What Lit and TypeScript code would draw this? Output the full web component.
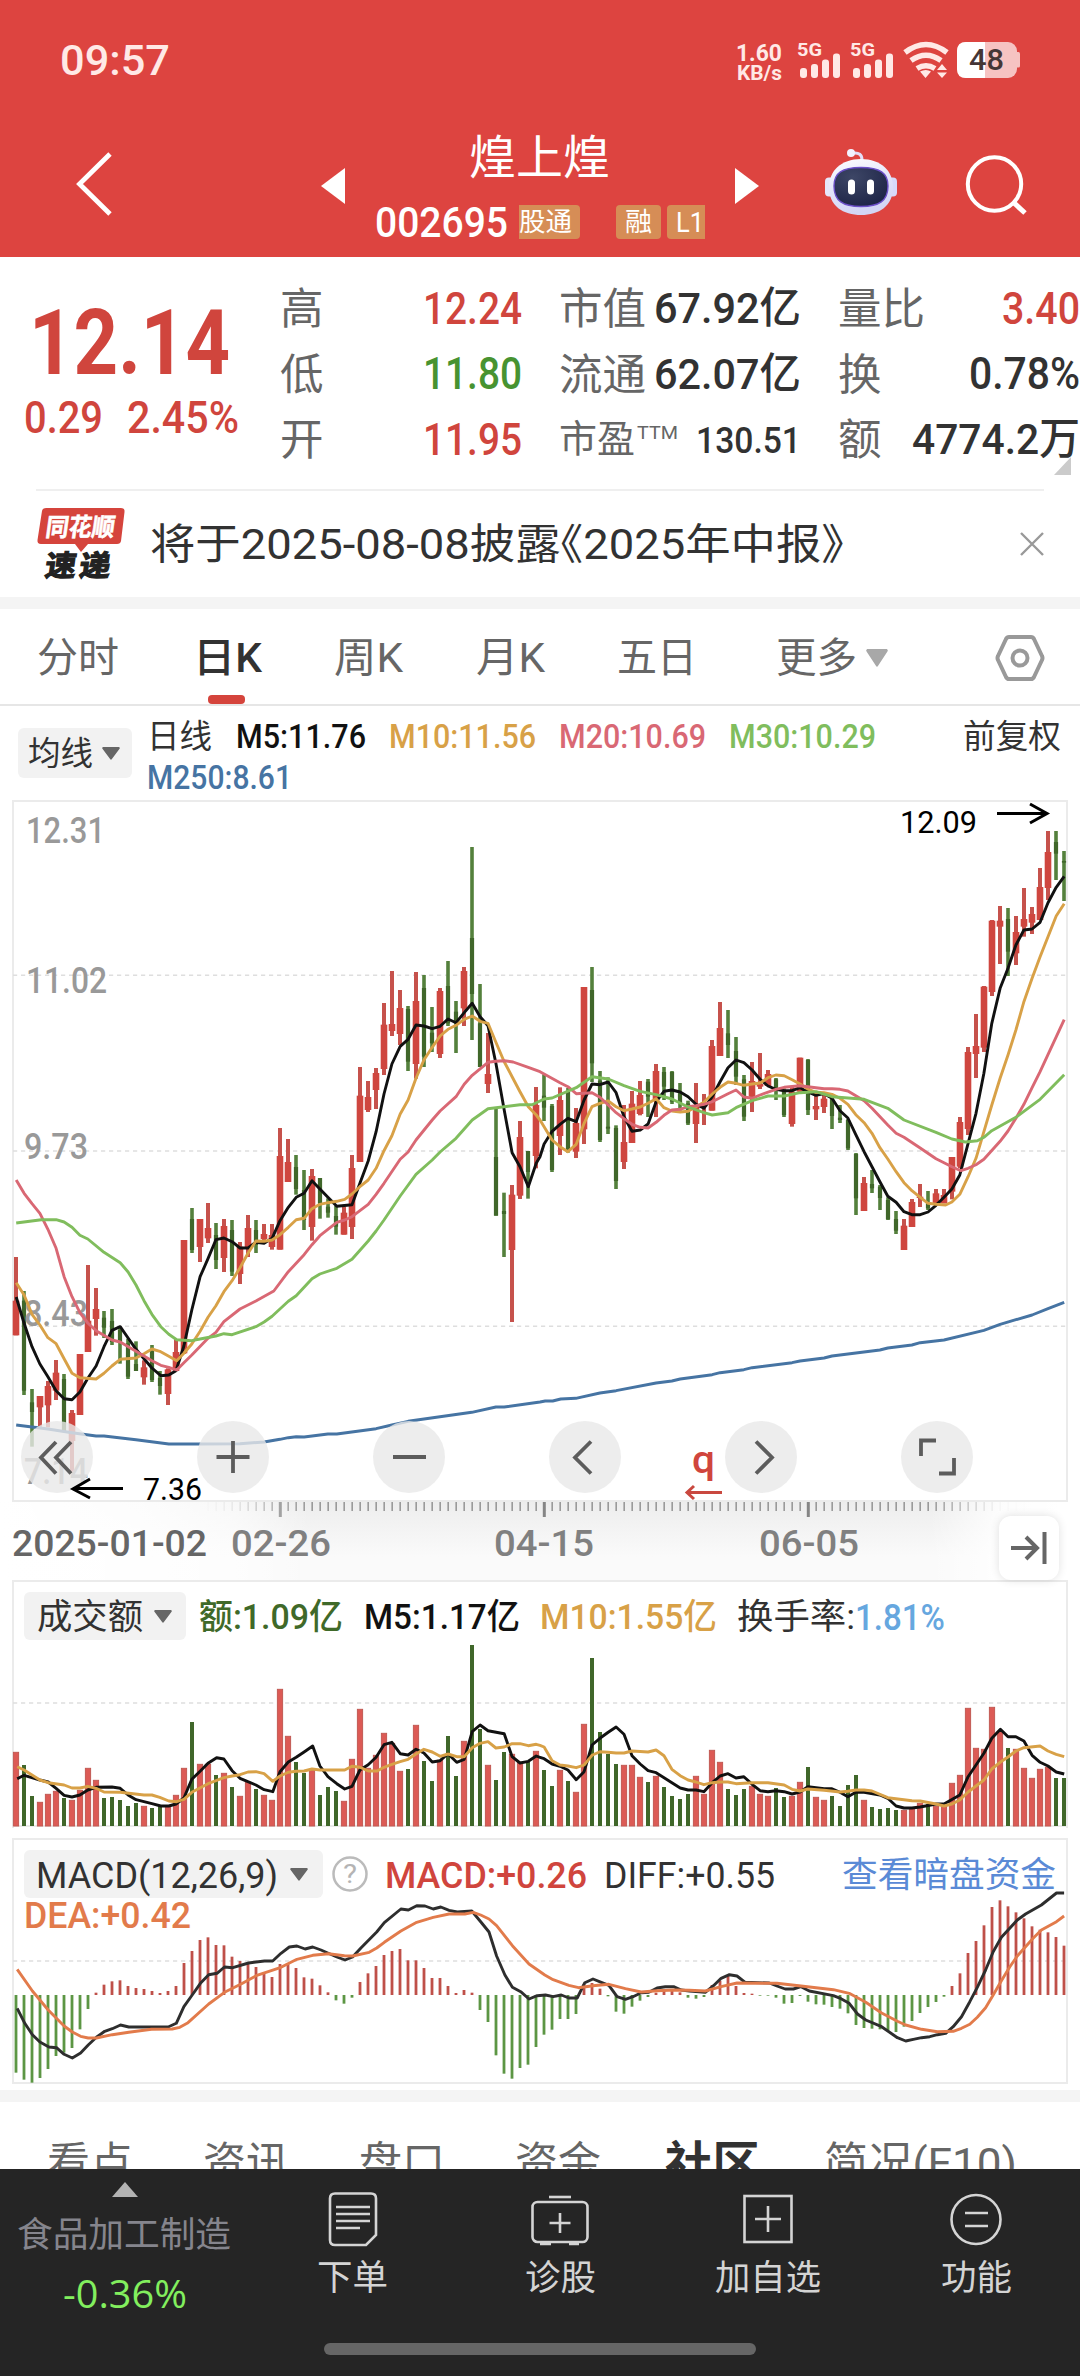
import { LitElement, html, svg, css } from "lit";
import { customElement } from "lit/decorators.js";

type Pt = number[];

/* One entry per trading day: direction, high, body top, body bottom, low (thirds of a pixel below the chart origin). */
const DAYS = `R 1401 1532 1636 1636|G 1503 1532 1802 1815|G 1797 1837 1866 1970|R 1818 1818 1852 1910|R 1773 1788 1846 1912|R 1710 1748 1802 1830|G 1752 1767 1925 1925|R 1860 1869 1953 2045|R 1692 1692 1875 1875|R 1425 1592 1686 1686
R 1494 1557 1587 1637|G 1563 1583 1613 1644|G 1557 1593 1656 1665|G 1610 1620 1655 1721|G 1646 1660 1760 1767|G 1654 1722 1743 1743|R 1711 1732 1762 1784|G 1665 1680 1770 1776|G 1743 1764 1788 1814|R 1735 1738 1812 1845
R 1647 1686 1743 1743|R 1350 1350 1690 1692|G 1254 1287 1380 1389|R 1287 1287 1371 1416|R 1239 1314 1345 1359|G 1299 1335 1410 1437|R 1287 1308 1404 1446|G 1290 1320 1445 1458|R 1356 1370 1452 1482|R 1275 1314 1375 1401
G 1290 1320 1365 1389|R 1302 1332 1347 1360|R 1302 1335 1371 1379|R 1014 1098 1379 1379|R 1047 1116 1176 1176|G 1095 1131 1197 1214|G 1140 1200 1290 1320|R 1137 1158 1311 1352|G 1164 1164 1240 1286|G 1225 1250 1268 1283
G 1248 1278 1310 1334|R 1250 1268 1334 1334|R 1095 1134 1311 1347|R 831 917 1116 1116|R 873 921 960 966|R 834 849 900 957|R 639 704 837 855|R 543 702 723 738|R 600 654 732 765|G 648 657 815 843
R 546 633 822 866|G 555 594 800 831|G 651 728 760 786|R 594 603 792 804|G 513 588 700 708|G 633 665 700 789|R 531 543 655 708|G 171 444 612 750|G 582 700 831 831|R 729 852 882 909
G 957 1101 1277 1277|G 1208 1263 1272 1401|R 1185 1214 1380 1596|R 993 1041 1217 1227|G 1083 1083 1146 1226|R 891 945 1098 1135|G 853 917 953 993|G 942 948 1140 1146|R 892 930 1038 1095|G 894 905 1080 1088
R 954 999 1085 1104|R 591 591 1018 1062|G 531 600 820 876|G 843 872 1050 1056|G 862 1010 1016 1032|G 1006 1014 1173 1197|R 945 1056 1116 1137|R 903 941 1059 1059|R 873 915 972 976|G 867 875 920 981
R 822 843 930 981|G 831 846 890 930|G 843 846 935 942|G 879 910 938 962|G 932 940 1000 1005|R 879 945 1002 1059|R 912 938 950 1005|R 750 768 962 962|R 636 714 798 798|G 660 730 765 804
G 741 783 860 885|G 855 868 980 993|R 816 873 920 966|R 789 882 890 897|R 840 852 888 888|G 864 868 900 930|G 895 905 975 981|R 890 905 1002 1010|R 803 803 905 905|G 807 810 960 975
R 905 948 958 990|R 915 926 951 969|G 915 925 978 1017|G 945 983 990 999|G 987 990 1075 1080|G 1089 1092 1225 1275|R 1161 1179 1263 1263|G 1140 1182 1195 1209|G 1185 1190 1224 1260|G 1222 1230 1288 1290
G 1263 1287 1322 1332|R 1287 1307 1380 1380|R 1227 1236 1311 1311|R 1182 1220 1224 1251|G 1203 1240 1255 1260|R 1197 1210 1240 1240|R 1197 1215 1240 1240|R 1101 1101 1205 1228|R 981 996 1130 1135|R 771 786 1017 1035
R 672 768 792 864|R 588 590 773 786|R 390 392 606 618|R 348 392 410 522|G 354 387 485 558|R 378 426 490 525|R 294 387 410 440|R 351 372 398 432|R 234 291 390 390|R 123 186 294 330
G 123 156 191 270|G 183 213 218 333`
  .split(/[|\n]/)
  .map((s) => s.trim().split(" "))
  .map(([d, ...v]) => ({ up: d === "R", v: v.map(Number) }));

const VOLUMES = `547 585 678 697 673 664 684 691 661 595 631 684 681 690 708 699 709 714 709 709 676 595 456 583 583 615 610 651 679 637 657 676 691 358 499 576 609 600 675 651 663 694 568 418 595 556 490 520 604 597 466 573 633 571 498 618 514 225 477 586 630 546 553 577 573 544 600 648 601 633 667 463 264 486 552 582 586 586 622 636 619 651 678 687 672 619 673 541 577 657 675 657 649 673 679 654 681 679 637 591 682 691 678 708 645 615 691 711 717 714 720 721 715 700 702 709 706 640 616 415 535 538 412 484 534 538 595 625 598 592 624 624`
  .split(" ").map(Number);

const MACD = `728 749 758 744 717 678 668 654 598 537 488 464 454 451 468 474 477 483 489 483 468 399 363 330 322 345 346 380 393 399 411 426 441 402 402 414 442 446 466 487 511 521 503 456 430 408 375 363 357 391 391 414 444 444 468 489 480 488 540 576 676 731 746 714 704 651 614 599 567 567 552 462 459 476 499 545 551 530 512 501 488 482 482 487 503 506 501 465 452 438 468 489 491 497 497 503 521 519 498 515 523 524 531 536 550 585 594 596 598 602 606 590 573 549 531 516 500 468 430 369 333 286 231 211 229 247 265 289 299 307 321 347`
  .split(" ").map(Number);

const dayX = (i: number) => 16 + 8 * i;

/* Builds an svg path from "x,y" samples; the second half of a series starts at mid-chart. */
const trace = (y0: number, left: string, right = "", kx = 2.9037) => {
  const read = (s: string, dx: number): Pt[] =>
    s.trim() ? s.trim().split(/\s+/).map((p) => {
      const [x, y] = p.split(",").map(Number);
      return [dx + x / kx, y0 + y / 3];
    }) : [];
  return "M" + [...read(left, 0), ...read(right, 540)].map((p) => p[0].toFixed(1) + " " + p[1].toFixed(1)).join("L");
};

const MA5 = trace(790,
  "47,1521 70,1600 93,1670 116,1722 139,1760 163,1802 186,1826 209,1829 232,1806 255,1765 279,1728 302,1670 325,1621 349,1610 372,1644 395,1678 418,1706 441,1734 467,1757 490,1755 511,1742 534,1668 557,1560 581,1460 604,1406 627,1349 650,1344 674,1355 697,1374 720,1374 743,1357 767,1360 790,1345 813,1292 837,1252 860,1222 883,1210 906,1172 929,1197 952,1222 978,1249 1022,1244 1045,1180 1069,1113 1092,1025 1115,912 1138,822 1162,769 1185,748 1208,705 1231,708 1255,716 1278,709 1301,687 1324,698 1348,668 1371,640 1394,680 1417,707 1440,820 1464,960 1487,1088 1510,1130 1534,1190 1557,1120",
  "0,1100 12,1062 35,1024 58,1003 81,985 105,995 128,930 151,882 174,884 198,876 221,908 244,980 267,1024 291,1020 314,1002 337,935 360,904 383,900 407,906 430,920 453,943 476,955 500,920 523,875 546,833 569,810 592,818 616,840 639,868 662,888 685,898 709,902 732,902 755,893 778,906 801,916 825,911 848,925 871,962 894,984 917,1034 941,1085 964,1130 987,1175 1010,1219 1034,1237 1057,1265 1080,1274 1104,1274 1127,1266 1150,1246 1173,1222 1196,1197 1219,1155 1243,1060 1266,970 1289,850 1312,700 1336,595 1359,535 1382,465 1405,420 1429,417 1452,397 1475,338 1499,292 1522,259");
const MA10 = trace(790,
  "47,1478 70,1515 93,1573 116,1605 139,1643 163,1661 186,1706 209,1750 232,1763 279,1767 302,1750 325,1728 349,1708 395,1704 418,1691 441,1677 464,1684 490,1699 513,1712 534,1690 557,1662 581,1624 604,1582 627,1547 650,1505 674,1472 697,1433 720,1390 743,1353 767,1354 790,1350 813,1334 837,1312 860,1289 883,1285 906,1256 929,1243 952,1238 978,1234 1001,1228 1022,1212 1045,1190 1069,1170 1092,1135 1115,1082 1138,1037 1162,972 1185,930 1208,865 1231,810 1255,772 1278,738 1301,718 1324,706 1348,688 1371,678 1394,694 1417,700 1440,757 1464,815 1487,860 1510,905 1534,950 1557,975",
  "0,990 35,1050 58,1070 81,1085 105,1063 128,1000 151,950 174,940 198,933 221,950 244,962 267,957 291,951 314,940 337,926 360,953 383,963 407,966 430,964 453,950 476,937 500,912 523,892 546,876 569,880 592,886 616,882 639,879 662,863 685,855 709,857 732,869 755,882 778,897 801,907 825,908 848,913 871,925 894,943 917,974 941,998 964,1030 987,1073 1010,1107 1034,1145 1057,1178 1080,1202 1104,1222 1127,1240 1150,1243 1178,1245 1196,1236 1219,1213 1243,1160 1266,1105 1289,1025 1312,945 1336,865 1359,795 1382,720 1405,635 1429,565 1452,500 1475,440 1499,378 1522,341");
const MA20 = trace(790,
  "47,1170 70,1210 93,1241 116,1270 139,1318 163,1375 186,1460 209,1520 232,1568 255,1599 279,1622 325,1650 349,1656 395,1684 441,1712 467,1726 490,1732 513,1740 534,1718 557,1695 604,1645 627,1627 650,1595 697,1557 743,1533 795,1503 837,1445 883,1394 906,1364 929,1337 978,1297 1001,1290 1022,1280 1069,1243 1092,1213 1115,1180 1162,1108 1185,1086 1208,1050 1255,990 1278,963 1324,920 1348,883 1371,856 1417,817 1440,814 1464,812 1490,816 1534,832",
  "0,845 58,878 81,890 105,911 151,908 174,922 198,945 221,968 244,986 267,1003 291,1012 314,1014 337,997 360,976 383,960 407,958 430,950 453,947 476,943 500,935 546,911 569,900 592,921 616,925 639,915 685,898 709,892 755,887 801,893 825,896 848,896 871,898 894,903 917,917 941,932 964,955 1010,1005 1034,1030 1057,1042 1104,1074 1150,1106 1173,1118 1196,1130 1222,1142 1243,1135 1266,1124 1289,1108 1336,1054 1359,1023 1382,985 1405,943 1429,893 1452,845 1522,689");
const MA30 = trace(790,
  "47,1299 120,1289 163,1289 186,1296 209,1312 232,1336 255,1347 302,1387 349,1418 372,1446 395,1485 418,1532 441,1573 467,1610 490,1633 513,1649 557,1652 581,1647 627,1638 650,1631 674,1634 743,1610 767,1596 790,1579 837,1534 860,1517 906,1466 929,1452 978,1435 1022,1408 1069,1353 1092,1323 1115,1290 1162,1218 1208,1153 1255,1110 1278,1086 1324,1045 1371,990 1417,956 1510,944 1545,944",
  "0,933 12,927 35,924 105,893 151,860 198,867 244,887 291,904 337,914 383,927 430,951 476,968 500,975 546,968 569,953 616,932 662,918 709,918 755,908 801,905 848,920 941,928 1010,955 1057,990 1150,1027 1196,1047 1235,1056 1270,1052 1289,1042 1312,1022 1382,982 1405,964 1452,928 1522,854");
const MA250 = trace(790,
  "47,1905 139,1917 209,1928 279,1938 302,1938 395,1949 490,1962 580,1962 697,1961 767,1956 813,1948 837,1943 860,1940 883,1941 952,1932 978,1932 1092,1916 1138,1905 1185,1894 1370,1867 1440,1851 1464,1851",
  "0,1836 15,1833 37,1833 60,1827 104,1825 174,1809 221,1802 337,1779 383,1773 407,1767 500,1754 523,1748 592,1739 616,1733 732,1718 755,1713 825,1704 848,1698 987,1680 1010,1674 1080,1665 1104,1658 1173,1650 1289,1621 1336,1603 1429,1575 1475,1556 1522,1537");
const VOL5 = trace(1570,
  "50,626 70,616 116,630 140,636 163,655 186,676 209,681 232,675 255,660 279,652 325,651 349,655 372,675 395,689 441,701 467,708 490,708 511,702 534,684 557,628 581,604 604,580 629,563 650,567 674,602 697,625 743,645 767,659 792,665 813,605 837,576 860,562 883,546 908,528 929,588 952,620 978,641 1001,657 1022,649 1045,600 1069,584 1092,562 1115,524 1138,517 1162,551 1185,555 1208,538 1231,549 1255,576 1278,572 1301,551 1326,577 1348,568 1371,485 1394,465 1417,482 1464,491 1487,560 1510,579 1534,574 1557,558",
  "0,562 12,566 35,582 58,589 81,600 105,629 128,605 151,525 174,505 198,487 221,471 244,493 267,557 291,582 314,602 337,608 383,638 407,654 430,660 453,660 476,665 500,638 523,618 546,611 569,624 592,620 616,643 639,662 662,665 685,662 709,665 732,672 755,666 778,650 825,656 848,656 871,667 894,680 917,667 941,667 987,675 1010,685 1034,708 1057,714 1080,714 1104,711 1150,702 1173,702 1219,675 1243,620 1289,550 1312,505 1337,478 1359,500 1382,500 1405,513 1429,556 1452,577 1475,588 1499,606 1522,612");
const VOL10 = trace(1570,
  "50,590 70,600 116,630 140,638 186,645 209,654 232,654 255,649 279,655 302,666 349,667 418,675 441,675 464,682 490,693 513,695 534,688 557,667 604,641 650,623 674,618 697,614 720,606 743,605 767,611 792,634 813,618 837,607 860,604 883,603 906,597 929,600 1001,600 1022,589 1045,592 1069,603 1095,603 1115,592 1138,583 1162,575 1185,568 1208,552 1231,538 1255,546 1278,559 1301,552 1326,560 1348,560 1371,533 1394,520 1417,515 1440,534 1464,531 1487,521 1510,521 1534,527 1557,523",
  "0,526 12,531 35,572 58,585 81,588 105,593 128,585 151,556 174,545 198,547 221,549 244,549 267,543 314,546 337,540 360,557 383,598 407,617 430,630 453,636 476,644 500,638 523,636 546,636 569,641 616,638 662,638 709,645 732,658 755,663 778,657 825,661 871,666 894,664 917,660 941,660 964,663 1010,683 1080,692 1104,693 1150,702 1173,708 1196,702 1219,690 1243,666 1289,630 1312,597 1336,577 1359,561 1382,543 1405,533 1452,528 1475,543 1499,553 1522,560");
const DIFF = trace(1830,
  "25,535 36,580 47,614 58,636 71,651 82,653 93,673 105,684 117,669 128,645 140,622 152,604 163,596 175,585 187,591 244,591 256,580 267,530 279,495 291,460 303,434 315,430 326,411 338,413 361,399 384,393 396,393 408,370 420,351 431,348 443,357 454,351 466,360 489,381 501,390 512,381 524,354 547,306 558,278 582,237 593,240 605,227 617,228 629,237 640,231 652,241 664,246 685,243 698,275 710,306 721,378 733,435 744,472 756,485 768,507 780,497 792,495 803,500 815,495 826,504 838,504 849,458 861,447 873,457 884,466 896,500 908,508 919,500 931,488 942,487 954,474 966,470 978,470 989,480 1001,483 1024,487 1036,467 1047,445 1059,434 1070,438 1082,457 1117,459 1128,468 1140,477 1152,477 1163,470 1175,483 1210,497 1221,506 1233,520 1245,552 1257,570 1280,590 1303,623 1315,633 1326,628 1338,623 1350,620 1361,614 1373,610 1384,590 1396,560 1408,515 1419,472 1431,420 1442,365 1454,322 1477,270 1489,252 1512,225 1534,189 1545,189", "", 1.4519);
const DEA = trace(1830,
  "25,418 47,483 70,540 93,588 105,606 117,619 128,624 140,624 163,614 187,607 220,598 250,597 261,592 273,578 303,522 326,487 350,462 373,436 408,412 431,388 454,376 477,371 500,377 512,378 536,367 547,354 558,337 582,303 605,277 629,262 652,252 675,252 687,247 698,255 710,267 721,287 744,347 768,402 791,435 803,449 826,466 840,473 861,467 884,463 908,476 931,486 954,482 978,480 1001,481 1024,483 1047,470 1070,459 1128,460 1163,468 1210,479 1233,490 1257,517 1280,549 1303,574 1315,585 1338,598 1361,605 1384,604 1396,595 1408,583 1419,562 1431,533 1442,495 1454,452 1466,411 1477,378 1500,325 1512,300 1534,275 1545,258", "", 1.4519);

/* Text run set to an exact advance width, vertically centred on its cap height. */
const t = (text: string, w: number, size: number, cls = "") => html`<svg class="t ${cls}" width=${w} height=${Math.round(size * 1.2)}>
  <text x="0" y=${size * 0.96} font-size=${size} textLength=${w} lengthAdjust="spacingAndGlyphs">${text}</text></svg>`;

/* The same run placed inside a chart: x is the left edge, cy the centre of the caps. */
const label = (text: string, x: number, cy: number, w: number, size: number, cls = "") =>
  svg`<text class=${cls} x=${x} y=${cy + size * 0.36} font-size=${size} textLength=${w} lengthAdjust="spacingAndGlyphs">${text}</text>`;

const caret = (w: number, h: number, cls: string) =>
  html`<svg class=${cls} width=${w} height=${h} viewBox="0 0 20 14" preserveAspectRatio="none"><path d="M1 0H19Q20.5 1 19.500 2L11 13Q10 14.500 9 13L.5 2Q-.5 1 1 0Z" /></svg>`;

@customElement("app-root")
export class AppRoot extends LitElement {
  static styles = css`
    :host { display: block; width: 1080px; height: 2376px; overflow: hidden; background: #fff; font-family: Roboto, "Noto Sans CJK SC", sans-serif; color: #323232; }
    * { box-sizing: border-box; }
    svg { display: block; flex: none; overflow: visible; }
    text { font-family: Roboto, "Noto Sans CJK SC", sans-serif; white-space: pre; }
    .t { fill: #323232; }
    .m { font-weight: 500; }
    .b { font-weight: 700; }
    .white { fill: #fff; }
    .soft { fill: #ffe9e6; }
    .grey { fill: #666; }
    .red { fill: #d0453d; }
    .green { fill: #479331; }
    .ink { fill: #111; }
    .gold { fill: #d8a147; }
    .pink { fill: #d96874; }
    .lime { fill: #80bd5d; }
    .blue { fill: #4674a3; }
    .forest { fill: #3f6929; }
    .sky { fill: #66a7df; }
    .link { fill: #5a8ad6; }
    .orange { fill: #e27b4b; }
    .light { fill: #d4d4d4; }
    .tight text { font-feature-settings: "halt"; font-family: Roboto, "Noto Sans CJK SC", sans-serif; }

    .head { height: 257px; background: #dd4440; }
    .status { height: 120px; padding: 0 60px 0 60px; display: flex; align-items: center; }
    .status .speed { margin-left: auto; display: flex; flex-direction: column; align-items: center; }
    .status .speed svg { height: 21px; }
    .status .tray { margin-left: 14px; }
    .nav { height: 137px; display: grid; grid-template-columns: 76px 245px 48px 366px 90px 141px 114px; align-items: start; }
    .nav .back { grid-column: 2; margin-top: 32px; }
    .nav .prev { grid-column: 3; margin-top: 48px; }
    .nav .next { margin-top: 48px; }
    .nav .bot { margin-top: 29px; }
    .nav .find { margin-top: 35px; }
    .name { display: flex; flex-direction: column; padding-top: 9px; }
    .name .title { margin-left: 100px; }
    .code { display: flex; align-items: center; margin-top: 12px; margin-left: 6px; height: 50px; }
    .tag { height: 34px; background: #d68d56; display: flex; align-items: center; border-radius: 4px; }
    .tag.gt { width: 61px; margin-left: 11px; border-radius: 0 4px 4px 0; }
    .tag.rz { width: 45px; margin-left: 36px; padding-left: 9px; }
    .tag.l1 { width: 38px; margin-left: 6px; padding-left: 9px; border-radius: 4px 0 0 4px; }

    .quote { height: 232px; display: flex; position: relative; }
    .price { width: 280px; padding-top: 31px; }
    .price .last { margin-left: 29px; }
    .price .delta { display: flex; gap: 24px; margin: -5px 0 0 24px; }
    .stats { flex: 1; display: grid; grid-template-columns: 242px 242px 242px; column-gap: 37px; grid-template-rows: 66px 65px 66px; padding-top: 18px; }
    .stat { display: flex; justify-content: space-between; align-items: center; }
    .pe { display: flex; gap: 2px; align-items: center; }
    .pe .ttm { margin-top: -14px; }
    .fold { position: absolute; left: 1054px; top: 200px; fill: #cbcbcb; }
    .news { height: 108px; display: flex; align-items: center; margin: 0 36px; border-top: 2px solid #efefef; }
    .news .line { margin-left: 25px; }
    .news .x { margin-left: auto; }
    .band { height: 12px; background: #f4f4f4; }

    .tabs { height: 97px; border-bottom: 2px solid #e6e6e6; display: grid; grid-template-columns: 37px 156px 141px 142px 141px 159px 90px 130px 84px; align-items: center; padding-top: 2px; }
    .tabs .first { grid-column: 2; }
    .on { position: relative; }
    .on i { position: absolute; left: 15px; top: 62px; width: 37px; height: 9px; border-radius: 4px; background: #d5443c; }
    .mid { fill: #a8a8a8; }
    .dark { fill: #666; }

    .ma { height: 94px; display: flex; padding: 0 18px; }
    .pill { background: #f2f2f2; border-radius: 6px; display: flex; align-items: center; }
    .pill.avg { width: 114px; height: 50px; margin-top: 22px; padding-left: 10px; gap: 9px; }
    .legend { margin: 9px 0 0 15px; flex: 1; display: grid; grid-template-columns: 89px 153px 170px 170px 234px 98px; grid-template-rows: 42px 42px; align-items: center; }
    .legend .wide { grid-column: 1 / span 2; margin-top: -2px; }

    .frame { fill: none; stroke: #ebebeb; stroke-width: 2; }
    .dash { stroke: #dedede; stroke-width: 1.4; stroke-dasharray: 4.200 3.800; }
    .axis { fill: #999; font-weight: 500; }
    .ln { fill: none; stroke-width: 2.900; stroke-linejoin: round; }
    .s-ink { stroke: #111; }
    .s-gold { stroke: #d8a147; }
    .s-pink { stroke: #d96874; }
    .s-lime { stroke: #80bd5d; }
    .s-blue { stroke: #4674a3; }
    .s-dark { stroke: #2e2e2e; }
    .s-orange { stroke: #e27b4b; }
    .up { fill: #cf463f; }
    .upw { fill: #c6524c; }
    .dn { fill: #40672a; }
    .dnw { fill: #54803c; }
    .vup { fill: #dc5a55; stroke: #c25a54; stroke-width: 1; }
    .hup { fill: #bf5049; }
    .hdn { fill: #5c9644; }
    .knob { fill: #e8e8e8; fill-opacity: .8; }
    .kicon { fill: none; stroke: #5c5c5c; stroke-width: 3.800; }
    .arrow { fill: none; stroke: #000; stroke-width: 3; }
    .rarrow { fill: none; stroke: #c9483f; stroke-width: 3; }

    .ruler { height: 78px; position: relative; background: linear-gradient(#ededed, #fafafa 70%); }
    .fade { position: absolute; inset: 0; background: linear-gradient(90deg, #fff 0, #fffd 140px, #fff9 235px, #fff0 310px, #fff0 930px, #fffd 1000px, #fff 1060px); }
    .dates { position: absolute; inset: 0; display: grid; grid-template-columns: 12px 219px 263px 265px 240px 60px; align-items: center; padding-top: 2px; }
    .dates .d0 { grid-column: 2; }
    .date { fill: #808080; }
    .end { width: 60px; height: 64px; margin-top: 11px; border-radius: 12px; background: #fff; box-shadow: 0 0 10px #0000001f; display: flex; align-items: center; justify-content: center; z-index: 1; }

    .panel { position: relative; }
    .row { position: absolute; left: 0; top: 12px; width: 1080px; height: 48px; display: flex; align-items: center; padding-left: 24px; }
    .pill.vol { width: 162px; height: 48px; padding-left: 13px; gap: 11px; margin-right: 13px; }
    .pill.mac { width: 299px; height: 48px; padding-left: 12px; gap: 12px; margin-right: 9px; }
    .g1 { margin-left: 21px; }
    .g2 { margin-left: 20px; }
    .g4 { margin-left: 17px; }
    .far { margin-left: 67px; }
    .q { fill: none; stroke: #bbb; stroke-width: 2.500; }
    .qt { fill: #b4b4b4; }

    .sections { height: 67px; overflow: hidden; display: grid; grid-template-columns: 47px 156px 156px 156px 150px 159px 200px; align-items: start; padding-top: 35px; }
    .sections .s0 { grid-column: 2; }
    .sections .big { margin-top: -2px; }
    .dock { height: 207px; background: #252525; position: relative; display: grid; grid-template-columns: 249px 207px 208px 208px 208px; justify-items: center; align-items: start; }
    .sector { width: 249px; padding: 13px 0 0 17px; }
    .sector .tri { margin-left: 95px; fill: #b3b3b3; }
    .sector .nm { margin-top: 16px; fill: #85858d; }
    .sector .pct { margin: 15px 0 0 46px; fill: #82ef5e; }
    .pct text { font-family: "Open Sans", sans-serif; }
    .tool { padding-top: 22px; display: flex; flex-direction: column; align-items: center; gap: 9px; }
    .ic { fill: none; stroke: #d4d4d4; stroke-width: 2.600; }
    .home { position: absolute; left: 324px; top: 174px; width: 432px; height: 12px; border-radius: 6px; background: #666; }
  `;

  private tray() {
    const bars = (x: number) => [[0, 68], [11, 64], [22, 59.5], [33, 53.5]].map(([d, y]) => svg`<rect x=${x + d} y=${y} width="7" height=${78 - y} rx="3" />`);
    return html`<svg class="tray soft" width="224" height="120" viewBox="796 0 224 120">
      ${label("5G", 797, 49.5, 25, 19, "b")}${label("5G", 850, 49.5, 25, 19, "b")}
      ${bars(800)}${bars(853)}
      <g fill="none" stroke="#ffe9e6" stroke-width="5.500">
        <path d="M905 52.500Q926 36.500 947 52.500" /><path d="M911 60.500Q926 50 941 60.500" /><path d="M917 68.500Q926 63 935 68.500" />
      </g>
      <path d="M920 71.500Q926 68.500 931 71.500L925.500 78ZM937 70L942 64L947 70ZM937 72.500L942 78L947 72.500Z" />
      <rect x="957" y="42" width="60" height="36" rx="9" fill="#f6c3c2" />
      <path d="M985 42H966Q957 42 957 51V69Q957 78 966 78H985Z" fill="#fff" />
      <path d="M1017 52H1018.500Q1020 52 1020 54V66Q1020 67.500 1018.500 67.500H1017Z" fill="#f6c3c2" />
      <g fill="#453636">${label("48", 969, 60, 35, 29, "m")}</g>
    </svg>`;
  }

  private bot() {
    return html`<svg class="bot" width="72" height="70" viewBox="0 0 72 70">
      <defs>
        <linearGradient id="shell" x1="0" y1="0" x2="0.3" y2="1"><stop offset="0" stop-color="#fff" /><stop offset=".55" stop-color="#e3e4f9" /><stop offset="1" stop-color="#d3d6f5" /></linearGradient>
        <radialGradient id="visor" cx=".35" cy=".25" r=".8"><stop offset="0" stop-color="#3d4666" /><stop offset="1" stop-color="#1e2547" /></radialGradient>
      </defs>
      <path d="M37 11Q37 3 28 4" fill="none" stroke="#e3def8" stroke-width="3" />
      <circle cx="26" cy="4" r="4" fill="#f3f2ff" />
      <rect x="0" y="28.500" width="9" height="19" rx="4" fill="#e6e6fa" /><rect x="63" y="28.500" width="9" height="19" rx="4" fill="#d7dafa" />
      <path d="M36 10C56 10 68 22 68 38C68 57 54 66 36 66C18 66 4 57 4 38C4 22 16 10 36 10Z" fill="url(#shell)" />
      <path d="M36 18.500C55 18.500 63 24 63 37C63 52 54 57.500 36 57.500C18 57.500 9 52 9 37C9 24 17 18.500 36 18.500Z" fill="url(#visor)" stroke="#6c50c8" stroke-width="1.400" />
      <rect x="23" y="30.500" width="7" height="15" rx="3.500" fill="#fff" /><rect x="42" y="30.500" width="7" height="15" rx="3.500" fill="#fff" />
    </svg>`;
  }

  private kline() {
    const y = (v: number) => 790 + v / 3;
    const knobs = [57, 233, 409, 585, 761, 937];
    return html`<svg width="1080" height="702" viewBox="0 800 1080 702">
      <rect class="frame" x="13" y="801" width="1054" height="700" />
      ${[975.3, 1151, 1326.3].map((g) => svg`<line class="dash" x1="13" x2="1066" y1=${g} y2=${g} />`)}
      ${DAYS.map(({ up, v }, i) => {
        const x = dayX(i), bw = up ? 6.6 : 4.2, ww = up ? 4 : 3.6;
        return svg`<rect class=${up ? "upw" : "dnw"} x=${x - ww / 2} y=${y(v[0])} width=${ww} height=${(v[3] - v[0]) / 3} />
          <rect class=${up ? "up" : "dn"} x=${x - bw / 2} y=${y(v[1])} width=${bw} height=${(v[2] - v[1]) / 3} />`;
      })}
      ${label("12.31", 26, 830, 79, 36, "axis")}${label("11.02", 26, 980, 81, 36, "axis")}
      ${label("9.73", 24, 1146.5, 64, 36, "axis")}${label("8.43", 24, 1313.5, 64, 36, "axis")}
      ${label("7.14", 24, 1471, 64, 36, "axis")}
      <path class="ln s-blue" d=${MA250} /><path class="ln s-ink" d=${MA5} /><path class="ln s-gold" d=${MA10} />
      <path class="ln s-pink" d=${MA20} /><path class="ln s-lime" d=${MA30} />
      ${label("12.09", 900, 821, 77, 32)}
      <path class="arrow" d="M997 813.500H1047M1030 804L1047 813.500L1030 823" />
      ${knobs.map((k) => svg`<circle class="knob" cx=${k} cy="1457" r="36" />`)}
      <path class="kicon" d="M56 1442L41 1457.500L56 1473.500M71 1442L56 1457.500L71 1473.500M233 1441V1473M216.500 1457H249.500M393 1457H426M591 1441.500L575 1457.500L591 1473.500M756 1441.500L772 1457.500L756 1473.500M921 1456V1440.500H936M939 1473.500H954V1458" />
      ${label("7.36", 143, 1488, 59, 32)}
      <path class="arrow" d="M123 1488.500H73M90 1479L73 1489L90 1498" />
      <g class="red">${label("q", 692, 1459, 23, 39, "m")}</g>
      <path class="rarrow" d="M722 1492.500H687M694 1486L687 1492.500L694 1499" />
    </svg>`;
  }

  private volume() {
    return html`<svg width="1080" height="258" viewBox="0 1580 1080 258">
      <path class="frame" d="M13 1828V1581H1067V1828M13 1826H1067" />
      <line class="dash" x1="13" x2="1066" y1="1703" y2="1703" />
      ${VOLUMES.map((v, i) => {
        const up = DAYS[i].up, w = up ? 5.2 : 4, top = 1570 + v / 3;
        return svg`<rect class=${up ? "vup" : "dn"} x=${dayX(i) - w / 2} y=${top} width=${w} height=${1826 - top} />`;
      })}
      <path class="ln s-ink" d=${VOL5} /><path class="ln s-gold" d=${VOL10} />
    </svg>`;
  }

  private macd() {
    return html`<svg width="1080" height="252" viewBox="0 1838 1080 252">
      <rect class="frame" x="13" y="1839" width="1054" height="244" />
      <line class="dash" x1="13" x2="1066" y1="1961" y2="1961" />
      ${MACD.map((v, i) => {
        const y = 1830 + v / 3;
        return svg`<rect class=${v < 495 ? "hup" : "hdn"} x=${dayX(i) - 1.4} y=${Math.min(y, 1995)} width="2.800" height=${Math.abs(1995 - y)} />`;
      })}
      <path class="ln s-dark" d=${DIFF} /><path class="ln s-orange" d=${DEA} />
      ${label("DEA:+0.42", 24, 1915, 167, 36, "orange m")}
    </svg>`;
  }

  render() {
    const stat = (name: string, value: unknown) => html`<div class="stat">${t(name, name.length * 43.5, 43.5, "grey")}${value}</div>`;
    return html`
      <header class="head">
        <div class="status">
          ${t("09:57", 110, 43, "soft m")}
          <div class="speed">${t("1.60", 46, 23, "soft b")}${t("KB/s", 45, 21, "soft b")}</div>
          ${this.tray()}
        </div>
        <div class="nav">
          <svg class="back" width="36" height="64" viewBox="0 0 36 64"><path d="M34 2L3.500 32L34 62" fill="none" stroke="#fff" stroke-width="4.800" /></svg>
          <svg class="prev white" width="24" height="36"><path d="M24 0V36L0 18Z" /></svg>
          <div class="name">
            <div class="title">${t("煌上煌", 141, 47, "white")}</div>
            <div class="code">${t("002695", 133, 43, "white m")}
              <span class="tag gt">${t("股通", 53, 26.5, "white")}</span>
              <span class="tag rz">${t("融", 27, 26.5, "white")}</span>
              <span class="tag l1">${t("L1", 28, 28, "white")}</span>
            </div>
          </div>
          <svg class="next white" width="24" height="36"><path d="M0 0V36L24 18Z" /></svg>
          ${this.bot()}
          <svg class="find" width="62" height="62" viewBox="0 0 62 62" fill="none" stroke="#fff" stroke-width="4"><circle cx="28.500" cy="29" r="26.700" /><path d="M47 47L59 58" stroke-width="5" /></svg>
        </div>
      </header>

      <section class="quote">
        <div class="price">
          <div class="last">${t("12.14", 201, 90, "red b")}</div>
          <div class="delta">${t("0.29", 79, 44, "red m")}${t("2.45%", 112, 44, "red m")}</div>
        </div>
        <div class="stats">
          ${stat("高", t("12.24", 99, 44, "red m"))}
          ${stat("市值", t("67.92亿", 147, 43, "m"))}
          ${stat("量比", t("3.40", 78, 44, "red m"))}
          ${stat("低", t("11.80", 99, 44, "green m"))}
          ${stat("流通", t("62.07亿", 147, 43, "m"))}
          ${stat("换", t("0.78%", 111, 44, "m"))}
          ${stat("开", t("11.95", 99, 44, "red m"))}
          <div class="stat"><span class="pe">${t("市盈", 76, 38, "grey")}<span class="ttm">${t("TTM", 41, 19, "grey")}</span></span>${t("130.51", 105, 37, "m")}</div>
          ${stat("额", t("4774.2万", 168, 43, "m"))}
        </div>
        <svg class="fold" width="17" height="18"><path d="M17 0V18H0Z" /></svg>
      </section>

      <section class="news">
        <svg width="89" height="74" viewBox="36 506 89 74">
          <path d="M46 507H121Q125 507 124.500 511L121 540Q120.500 543 117 543H88L81 551L75 543H41Q37 543 37.500 539L42 510Q42.500 507 46 507Z" fill="#d5443c" />
          <g transform="skewX(-8)" class="b">
            <g fill="#fff" stroke="#fff" stroke-width=".6">${label("同花顺", 120, 526, 69, 25)}</g>
            <g fill="#222" stroke="#222" stroke-width="1.200">${label("速", 125, 565, 31, 29)}${label("递", 159, 565, 31, 29)}</g>
          </g>
        </svg>
        <div class="line">${t("将于2025-08-08披露《2025年中报》", 694, 42, "tight")}</div>
        <svg class="x" width="24" height="24" viewBox="0 0 24 24" fill="none" stroke="#999" stroke-width="2.400"><path d="M1 1L23 23M23 1L1 23" /></svg>
      </section>
      <div class="band"></div>

      <nav class="tabs">
        <div class="first">${t("分时", 82, 41, "grey")}</div>
        <div class="on">${t("日K", 69, 41, "m")}<i></i></div>
        <div>${t("周K", 69, 41, "grey")}</div>
        <div>${t("月K", 69, 41, "grey")}</div>
        <div>${t("五日", 80, 41, "grey")}</div>
        <div>${t("更多", 81, 41, "grey")}</div>
        ${caret(22, 18, "mid")}
        <svg width="48" height="46" viewBox="0 0 48 46" fill="none" stroke="#999" stroke-width="4"><path d="M13 2H35Q37 2 38 4L46 21Q47 23 46 25L38 42Q37 44 35 44H13Q11 44 10 42L2 25Q1 23 2 21L10 4Q11 2 13 2Z" /><circle cx="24" cy="23" r="7.500" /></svg>
      </nav>

      <section class="ma">
        <div class="pill avg">${t("均线", 65, 32.5)}${caret(18, 13, "dark")}</div>
        <div class="legend">
          ${t("日线", 65, 32.5)}${t("M5:11.76", 130, 33, "ink m")}${t("M10:11.56", 147, 33, "gold m")}${t("M20:10.69", 147, 33, "pink m")}${t("M30:10.29", 147, 33, "lime m")}${t("前复权", 98, 32.5)}
          <div class="wide">${t("M250:8.61", 145, 33, "blue m")}</div>
        </div>
      </section>

      ${this.kline()}

      <section class="ruler">
        <div class="fade"></div>
        <svg width="1080" height="16">
          ${Array.from({ length: 103 }, (_, k) => k + 24).map((i) => {
            const big = i === 33 || i === 66 || i === 99;
            const edge = big ? 1 : Math.max(0.1, Math.min(1, (i - 23) / 9, (127 - i) / 8));
            return svg`<rect x=${dayX(i) + (big ? -1.2 : -0.5)} y="0" width=${big ? 3 : 1.3} height=${big ? 15 : 9} fill="#858585" opacity=${edge} />`;
          })}
        </svg>
        <div class="dates">
          <div class="d0">${t("2025-01-02", 195, 36, "m grey")}</div>
          ${t("02-26", 100, 36, "date m")}${t("04-15", 100, 36, "date m")}${t("06-05", 100, 36, "date m")}
          <div class="end"><svg width="36" height="34" viewBox="0 0 36 34" fill="none" stroke="#666" stroke-width="4"><path d="M0 17H26M15 6L26 17L15 28M33.500 1V33" /></svg></div>
        </div>
      </section>

      <section class="panel">
        ${this.volume()}
        <div class="row">
          <div class="pill vol">${t("成交额", 106, 35.3)}${caret(18, 13, "dark")}</div>
          ${t("额:1.09亿", 144, 35, "forest m")}
          <div class="g1">${t("M5:1.17亿", 156, 35, "ink m")}</div>
          <div class="g2">${t("M10:1.55亿", 177, 35, "gold m")}</div>
          <div class="g2">${t("换手率:", 118, 35)}</div>
          <div class="g0">${t("1.81%", 90, 36, "sky m")}</div>
        </div>
      </section>

      <section class="panel">
        ${this.macd()}
        <div class="row">
          <div class="pill mac">${t("MACD(12,26,9)", 242, 36)}${caret(18, 13, "dark")}</div>
          <svg width="36" height="36"><circle class="q" cx="18" cy="18" r="16.500" /><g class="qt">${label("?", 11, 18, 14, 26)}</g></svg>
          <div class="g4">${t("MACD:+0.26", 202, 36, "red m")}</div>
          <div class="g4">${t("DIFF:+0.55", 171, 36)}</div>
          <div class="far">${t("查看暗盘资金", 214, 35.6, "link")}</div>
        </div>
      </section>
      <div class="band"></div>

      <nav class="sections">
        <div class="s0">${t("看点", 86, 43, "grey")}</div>${t("资讯", 86, 43, "grey")}${t("盘口", 86, 43, "grey")}${t("资金", 86, 43, "grey")}
        <div class="big">${t("社区", 95, 47.5, "b")}</div>${t("简况(F10)", 193, 43, "grey")}
      </nav>

      <footer class="dock">
        <div class="sector">
          <svg class="tri" width="26" height="15"><path d="M13 0L26 15H0Z" /></svg>
          ${t("食品加工制造", 214, 35.6, "nm")}
          ${t("-0.36%", 124, 39, "pct")}
        </div>
        <div class="tool"><svg class="ic" width="50" height="56" viewBox="0 0 50 56"><path d="M7 2.500H43Q48 2.500 48 7.500V44L38 54H7Q2 54 2 49V7.500Q2 2.500 7 2.500Z" /><path d="M8 16H42M8 23H42M8 30H42M8 37H32" /></svg>${t("下单", 71, 35.5, "light")}</div>
        <div class="tool"><svg class="ic" width="58" height="56" viewBox="0 0 58 56"><path d="M18 6H40" /><rect x="1.500" y="11" width="55" height="40" rx="5" /><path d="M29 22V42M18.500 32H39.500M9 53H20M38 53H48" /></svg>${t("诊股", 71, 35.5, "light")}</div>
        <div class="tool"><svg class="ic" width="50" height="56" viewBox="0 0 50 56"><rect x="1.500" y="5" width="47" height="46" /><path d="M25 15V41M12 28H38" /></svg>${t("加自选", 106, 35.5, "light")}</div>
        <div class="tool"><svg class="ic" width="52" height="56" viewBox="0 0 52 56"><circle cx="26" cy="28.500" r="24.500" /><path d="M15 22H38M15 35H38" /></svg>${t("功能", 71, 35.5, "light")}</div>
        <div class="home"></div>
      </footer>`;
  }
}
